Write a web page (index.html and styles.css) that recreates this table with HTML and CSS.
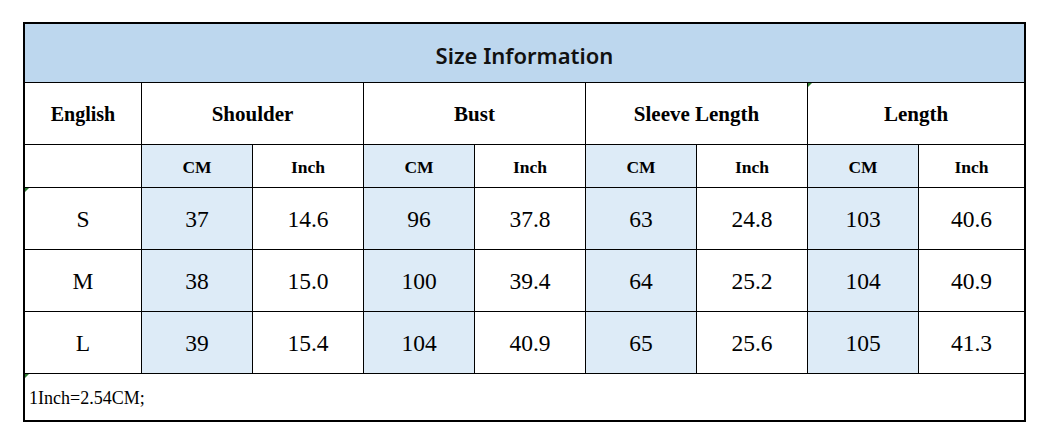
FILE: index.html
```html
<!DOCTYPE html>
<html>
<head>
<meta charset="utf-8">
<link rel="stylesheet" href="styles.css">
</head>
<body>
<div class="sheet">
  <div class="cell title span9">Size Information</div>

  <div class="cell head first eng">English</div>
  <div class="cell head span2">Shoulder</div>
  <div class="cell head span2">Bust</div>
  <div class="cell head span2">Sleeve Length</div>
  <div class="cell head span2 mark">Length</div>

  <div class="cell first"></div>
  <div class="cell unit blue">CM</div><div class="cell unit">Inch</div>
  <div class="cell unit blue">CM</div><div class="cell unit">Inch</div>
  <div class="cell unit blue">CM</div><div class="cell unit">Inch</div>
  <div class="cell unit blue">CM</div><div class="cell unit">Inch</div>

  <div class="cell val first mark">S</div>
  <div class="cell val blue">37</div><div class="cell val">14.6</div>
  <div class="cell val blue">96</div><div class="cell val">37.8</div>
  <div class="cell val blue">63</div><div class="cell val">24.8</div>
  <div class="cell val blue">103</div><div class="cell val">40.6</div>

  <div class="cell val first">M</div>
  <div class="cell val blue">38</div><div class="cell val">15.0</div>
  <div class="cell val blue">100</div><div class="cell val">39.4</div>
  <div class="cell val blue">64</div><div class="cell val">25.2</div>
  <div class="cell val blue">104</div><div class="cell val">40.9</div>

  <div class="cell val first">L</div>
  <div class="cell val blue">39</div><div class="cell val">15.4</div>
  <div class="cell val blue">104</div><div class="cell val">40.9</div>
  <div class="cell val blue">65</div><div class="cell val">25.6</div>
  <div class="cell val blue">105</div><div class="cell val">41.3</div>

  <div class="cell note span9 mark">1Inch=2.54CM;</div>
</div>
</body>
</html>
```

FILE: styles.css
```css
html, body {
  margin: 0;
  padding: 0;
  background: #ffffff;
}

body {
  padding: 22px 0 0 23px;
}

.sheet {
  display: grid;
  grid-template-columns: 116px repeat(7, 111px) 106px;
  grid-template-rows: 58px 62px 43px 62px 62px 62px 47px;
  width: 999px;
  border: 2px solid #000;
  font-family: "Liberation Serif", "Times New Roman", serif;
  color: #000;
}

.cell {
  position: relative;
  box-sizing: border-box;
  display: flex;
  align-items: center;
  justify-content: center;
  border-left: 1px solid #000;
  border-top: 1px solid #000;
  background: #ffffff;
}

.cell.first {
  border-left: none;
}

.span9 {
  grid-column: span 9;
  border-left: none;
}

.span2 {
  grid-column: span 2;
}

.title {
  border-top: none;
  background: #bdd7ee;
  font-family: "Noto Sans", "Open Sans", sans-serif;
  font-size: 22px;
  font-weight: 600;
  color: #111;
  padding-top: 4px;
}

.head {
  font-size: 21px;
  font-weight: bold;
  padding-top: 1px;
}

.head.eng {
  font-size: 20px;
}

.unit {
  font-size: 17.5px;
  font-weight: bold;
  padding-top: 2px;
}

.val {
  font-size: 23.5px;
  padding-top: 2px;
}

.blue {
  background: #ddebf7;
}

.note {
  justify-content: flex-start;
  padding-left: 4px;
  font-size: 18px;
  padding-top: 2px;
}

.mark::before {
  content: "";
  position: absolute;
  left: 0;
  top: 0;
  width: 0;
  height: 0;
  border-top: 4px solid #2e7d32;
  border-right: 4px solid transparent;
}
```
